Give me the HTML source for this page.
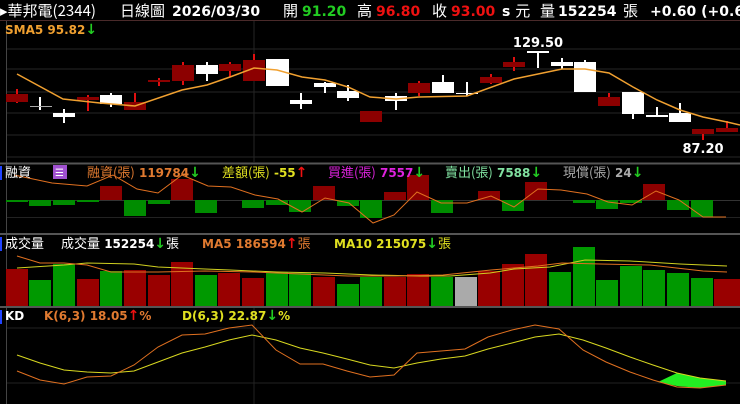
<!DOCTYPE html>
<html><head><meta charset="utf-8"><style>
html,body{margin:0;padding:0;background:#000;width:740px;height:404px;overflow:hidden}
svg{display:block}
text{font-family:"DejaVu Sans","Noto Sans CJK TC",sans-serif;font-weight:bold}
.cj{font-family:"Noto Sans CJK TC",sans-serif;font-weight:normal}
</style></head><body>
<svg width="740" height="404" viewBox="0 0 740 404" xmlns="http://www.w3.org/2000/svg">
<rect width="740" height="404" fill="#000"/>
<g font-size="14">
<text x="0" y="16" fill="#fff" class="cj" font-size="15">▸華邦電(2344)</text>
<text x="120" y="16" fill="#fff" class="cj" font-size="15">日線圖</text>
<text x="172" y="16" fill="#fff">2026/03/30</text>
<text x="283" y="16" fill="#fff" class="cj" font-size="15">開</text>
<text x="302" y="16" fill="#22cc22">91.20</text>
<text x="357" y="16" fill="#fff" class="cj" font-size="15">高</text>
<text x="376" y="16" fill="#ee1111">96.80</text>
<text x="432" y="16" fill="#fff" class="cj" font-size="15">收</text>
<text x="451" y="16" fill="#ee1111">93.00</text>
<text x="502" y="16" fill="#fff">s <tspan class="cj" font-size="15">元</tspan></text>
<text x="540" y="16" fill="#fff" class="cj" font-size="15">量</text>
<text x="558" y="16" fill="#fff">152254</text>
<text x="623" y="16" fill="#fff" class="cj" font-size="15">張</text>
<text x="650" y="16" fill="#fff">+0.60 (+0.6</text>
</g>
<line x1="0" y1="20.5" x2="740" y2="20.5" stroke="#4a2a2a"/>
<line x1="6.5" y1="21" x2="6.5" y2="404" stroke="#444"/>
<g stroke="#262626">
<line x1="7" y1="49" x2="740" y2="49"/><line x1="7" y1="69" x2="740" y2="69"/><line x1="7" y1="92" x2="740" y2="92"/><line x1="7" y1="113" x2="740" y2="113"/><line x1="7" y1="135" x2="740" y2="135"/><line x1="7" y1="157" x2="740" y2="157"/>
<line x1="254" y1="21" x2="254" y2="162"/>
</g>
<text x="5" y="34" fill="#f0a030" font-size="12">SMA5 95.82<tspan fill="#22cc22" font-size="14">↓</tspan></text>
<g stroke-width="2">
<g stroke="#e01010"><line x1="17" y1="89" x2="17" y2="103"/><line x1="88" y1="95" x2="88" y2="111"/><line x1="135" y1="93" x2="135" y2="110"/><line x1="159" y1="78" x2="159" y2="86"/><line x1="183" y1="62" x2="183" y2="85"/><line x1="230" y1="62" x2="230" y2="77"/><line x1="254" y1="54" x2="254" y2="81"/><line x1="419" y1="81" x2="419" y2="96"/><line x1="491" y1="74" x2="491" y2="84"/><line x1="514" y1="57" x2="514" y2="71"/><line x1="609" y1="93" x2="609" y2="106"/><line x1="703" y1="129" x2="703" y2="140"/><line x1="727" y1="121" x2="727" y2="132"/></g>
<g stroke="#fff"><line x1="40" y1="97" x2="40" y2="110"/><line x1="64" y1="109" x2="64" y2="123"/><line x1="111" y1="93" x2="111" y2="107"/><line x1="207" y1="62" x2="207" y2="81"/><line x1="301" y1="93" x2="301" y2="109"/><line x1="325" y1="82" x2="325" y2="93"/><line x1="348" y1="85" x2="348" y2="101"/><line x1="396" y1="93" x2="396" y2="110"/><line x1="443" y1="75" x2="443" y2="93"/><line x1="467" y1="82" x2="467" y2="96"/><line x1="538" y1="51" x2="538" y2="68"/><line x1="562" y1="58" x2="562" y2="69"/><line x1="585" y1="60" x2="585" y2="92"/><line x1="633" y1="92" x2="633" y2="119"/><line x1="657" y1="107" x2="657" y2="117"/><line x1="680" y1="103" x2="680" y2="122"/></g>
</g>
<g fill="#8c0000">
<rect x="6" y="94" width="22" height="8"/><rect x="77" y="97" width="22" height="3"/><rect x="124" y="102" width="22" height="8"/><rect x="148" y="80" width="22" height="2"/><rect x="172" y="65" width="22" height="16"/><rect x="219" y="64" width="22" height="7"/><rect x="243" y="60" width="22" height="21"/><rect x="360" y="111" width="22" height="11"/><rect x="408" y="83" width="22" height="10"/><rect x="480" y="77" width="22" height="6"/><rect x="503" y="62" width="22" height="5"/><rect x="598" y="97" width="22" height="9"/><rect x="692" y="129" width="22" height="5"/><rect x="716" y="128" width="22" height="4"/>
</g>
<g fill="#fff">
<rect x="30" y="106" width="22" height="1" fill="#aaa"/><rect x="53" y="113" width="22" height="4"/><rect x="100" y="95" width="22" height="9"/><rect x="196" y="65" width="22" height="9"/><rect x="266" y="59" width="23" height="27"/><rect x="290" y="100" width="22" height="4"/><rect x="314" y="83" width="22" height="4"/><rect x="337" y="91" width="22" height="7"/><rect x="385" y="96" width="22" height="5"/><rect x="432" y="82" width="22" height="11"/><rect x="456" y="93" width="22" height="1"/><rect x="527" y="51" width="22" height="2"/><rect x="551" y="62" width="22" height="4"/><rect x="574" y="62" width="22" height="30"/><rect x="622" y="92" width="22" height="22"/><rect x="646" y="115" width="22" height="2"/><rect x="669" y="113" width="22" height="9"/>
</g>
<polyline fill="none" stroke="#f0a030" stroke-width="1.5" points="17,74 63,99 100,103 135,106 182,90 207,85 230,77 254,68 277,70 302,77 325,80 348,87 370,97 396,99 419,97 467,96 514,79 562,69 585,69 609,73 633,87 657,100 680,110 703,117 727,122 740,125"/>
<text x="538" y="47" fill="#fff" font-size="13" text-anchor="middle">129.50</text>
<text x="703" y="153" fill="#fff" font-size="13" text-anchor="middle">87.20</text>
<line x1="0" y1="163.5" x2="740" y2="163.5" stroke="#555" stroke-width="2"/>
<line x1="7" y1="200.5" x2="740" y2="200.5" stroke="#333"/>
<line x1="7" y1="217.5" x2="740" y2="217.5" stroke="#222"/>
<g fill="#8c0000"><rect x="100" y="186" width="22" height="14"/><rect x="171" y="179" width="22" height="21"/><rect x="313" y="186" width="22" height="14"/><rect x="384" y="192" width="22" height="8"/><rect x="407" y="175" width="22" height="25"/><rect x="478" y="191" width="22" height="9"/><rect x="525" y="182" width="22" height="18"/><rect x="643" y="184" width="22" height="16"/></g>
<g fill="#008c00"><rect x="6" y="200" width="22" height="2"/><rect x="29" y="200" width="22" height="6"/><rect x="53" y="200" width="22" height="5"/><rect x="77" y="200" width="22" height="2"/><rect x="124" y="200" width="22" height="16"/><rect x="148" y="200" width="22" height="4"/><rect x="195" y="200" width="22" height="13"/><rect x="242" y="200" width="22" height="8"/><rect x="266" y="200" width="22" height="5"/><rect x="289" y="200" width="22" height="12"/><rect x="337" y="200" width="22" height="6"/><rect x="360" y="200" width="22" height="18"/><rect x="431" y="200" width="22" height="13"/><rect x="502" y="200" width="22" height="11"/><rect x="573" y="200" width="22" height="3"/><rect x="596" y="200" width="22" height="9"/><rect x="620" y="200" width="22" height="3"/><rect x="667" y="200" width="22" height="10"/><rect x="691" y="200" width="22" height="17"/></g>
<polyline fill="none" stroke="#e07020" stroke-width="1" points="14,175 52,183 87,186 113,175 137,189 158,193 182,175 208,186 231,187 255,195 278,199 302,212 325,198 349,203 373,223 394,215 417,192 441,203 467,203 491,196 514,207 538,189 561,190 587,194 608,202 632,205 656,191 679,200 703,217 726,217"/>
<rect x="0" y="166" width="2" height="14" fill="#2244ff"/>
<g font-size="12">
<text x="5" y="177" fill="#fff" class="cj" font-size="13">融資</text>
<rect x="53" y="165" width="14" height="14" fill="#a050d0"/><text x="55" y="176" fill="#fff" font-size="10">☰</text>
<text x="87" y="177" fill="#e07a30"><tspan class="cj" font-size="13">融資(張)</tspan> 119784<tspan fill="#22cc22" font-size="14">↓</tspan></text>
<text x="222" y="177" fill="#e0e020"><tspan class="cj" font-size="13">差額(張)</tspan> -55<tspan fill="#ee1111" font-size="14">↑</tspan></text>
<text x="328" y="177" fill="#dd22dd"><tspan class="cj" font-size="13">買進(張)</tspan> 7557<tspan fill="#22cc22" font-size="14">↓</tspan></text>
<text x="445" y="177" fill="#80e0a0"><tspan class="cj" font-size="13">賣出(張)</tspan> 7588<tspan fill="#22cc22" font-size="14">↓</tspan></text>
<text x="563" y="177" fill="#aaa"><tspan class="cj" font-size="13">現償(張)</tspan> 24<tspan fill="#22cc22" font-size="14">↓</tspan></text>
</g>
<line x1="0" y1="234" x2="740" y2="234" stroke="#555" stroke-width="2"/>
<g fill="#990000"><rect x="6" y="269" width="22" height="37"/><rect x="77" y="279" width="22" height="27"/><rect x="124" y="270" width="22" height="36"/><rect x="148" y="275" width="22" height="31"/><rect x="171" y="262" width="22" height="44"/><rect x="218" y="273" width="22" height="33"/><rect x="242" y="278" width="22" height="28"/><rect x="313" y="277" width="22" height="29"/><rect x="384" y="277" width="22" height="29"/><rect x="407" y="274" width="22" height="32"/><rect x="478" y="271" width="22" height="35"/><rect x="502" y="264" width="22" height="42"/><rect x="525" y="254" width="22" height="52"/><rect x="714" y="279" width="26" height="27"/></g>
<g fill="#009900"><rect x="29" y="280" width="22" height="26"/><rect x="53" y="264" width="22" height="42"/><rect x="100" y="271" width="22" height="35"/><rect x="195" y="275" width="22" height="31"/><rect x="266" y="272" width="22" height="34"/><rect x="289" y="273" width="22" height="33"/><rect x="337" y="284" width="22" height="22"/><rect x="360" y="277" width="22" height="29"/><rect x="431" y="277" width="22" height="29"/><rect x="549" y="272" width="22" height="34"/><rect x="573" y="247" width="22" height="59"/><rect x="596" y="280" width="22" height="26"/><rect x="620" y="266" width="22" height="40"/><rect x="643" y="270" width="22" height="36"/><rect x="667" y="273" width="22" height="33"/><rect x="691" y="278" width="22" height="28"/></g>
<rect x="455" y="277" width="22" height="29" fill="#aaa"/>
<polyline fill="none" stroke="#d0d020" stroke-width="1" points="17,268 64,265 87,263 134,264 158,267 205,269 230,270 277,272 325,273 372,275 420,276 450,276 490,273 514,269 550,267 585,260 630,261 680,264 727,266"/>
<polyline fill="none" stroke="#e07020" stroke-width="1" points="17,256 40,263 64,263 87,265 111,272 158,272 205,271 254,272 300,274 348,276 396,276 443,275 491,270 538,266 562,263 600,264 650,265 703,271 727,272"/>
<rect x="0" y="237" width="2" height="14" fill="#2244ff"/>
<g font-size="12">
<text x="5" y="248" fill="#fff" class="cj" font-size="13">成交量</text>
<text x="61" y="248" fill="#fff"><tspan class="cj" font-size="13">成交量</tspan> 152254<tspan fill="#22cc22" font-size="14">↓</tspan><tspan class="cj" font-size="13">張</tspan></text>
<text x="202" y="248" fill="#e07a30">MA5 186594<tspan fill="#ee1111" font-size="14">↑</tspan><tspan class="cj" font-size="13">張</tspan></text>
<text x="334" y="248" fill="#e0e020">MA10 215075<tspan fill="#22cc22" font-size="14">↓</tspan><tspan class="cj" font-size="13">張</tspan></text>
</g>
<line x1="0" y1="307" x2="740" y2="307" stroke="#555" stroke-width="2"/>
<line x1="7" y1="328" x2="740" y2="328" stroke="#222"/>
<line x1="7" y1="383" x2="740" y2="383" stroke="#222"/>
<line x1="254" y1="308" x2="254" y2="404" stroke="#222"/>
<polygon fill="#22ee22" points="658,382 677,386 700,388 726,385 726,381 700,378 677,373"/>
<polyline fill="none" stroke="#d8d820" stroke-width="1" points="17,355 40,363 64,370 87,372 111,373 134,371 158,362 182,353 205,347 229,340 252,335 276,340 300,348 323,353 347,359 370,365 394,368 417,363 441,359 465,356 488,349 512,343 535,337 559,334 583,340 606,348 630,357 653,365 677,373 700,378 726,381"/>
<polyline fill="none" stroke="#e07020" stroke-width="1" points="17,371 40,380 64,384 87,377 111,376 134,365 158,347 182,335 205,334 229,328 252,325 276,350 300,364 323,364 347,371 370,377 394,375 417,353 441,351 465,349 488,337 512,330 535,325 559,329 583,350 606,362 630,372 653,380 677,387 700,388 726,385"/>
<rect x="0" y="310" width="2" height="14" fill="#2244ff"/>
<g font-size="12">
<text x="5" y="320" fill="#fff">KD</text>
<text x="44" y="320" fill="#e07a30">K(6,3) 18.05<tspan fill="#ee1111" font-size="14">↑</tspan>%</text>
<text x="182" y="320" fill="#e0e020">D(6,3) 22.87<tspan fill="#22cc22" font-size="14">↓</tspan>%</text>
</g>
</svg>
</body></html>
